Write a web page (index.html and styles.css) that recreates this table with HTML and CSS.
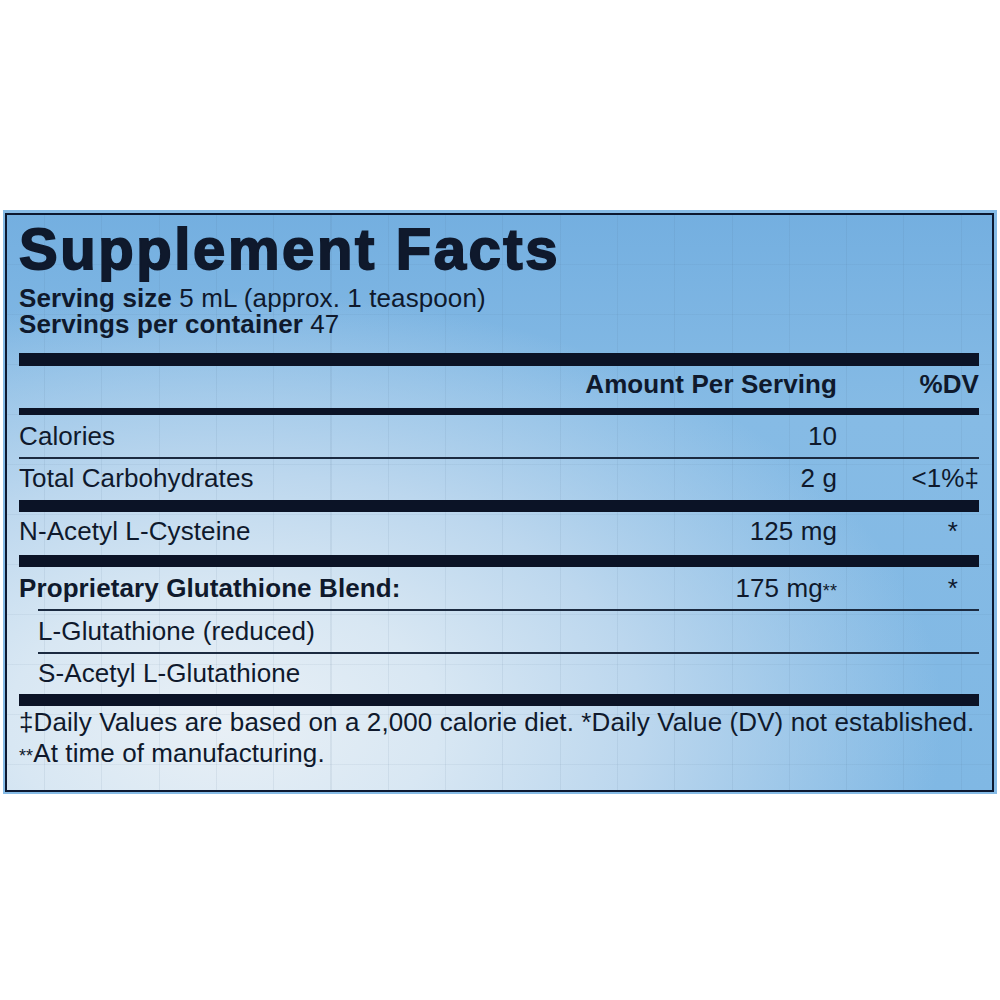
FILE: index.html
```html
<!DOCTYPE html>
<html>
<head>
<meta charset="utf-8">
<link rel="stylesheet" href="styles.css">
</head>
<body>
<div class="frame">
  <div class="label">
    <h1 class="title">Supplement Facts</h1>
    <div class="serving">
      <div class="line"><b>Serving size</b> 5 mL (approx. 1 teaspoon)</div>
      <div class="line"><b>Servings per container</b> 47</div>
    </div>
    <div class="rule thick13 first"></div>
    <div class="row hdr"><span class="name"></span><span class="amt">Amount Per Serving</span><span class="dv">%DV</span></div>
    <div class="rule thick7"></div>
    <div class="row cal"><span class="name">Calories</span><span class="amt">10</span><span class="dv"></span></div>
    <div class="rule thin"></div>
    <div class="row carb"><span class="name">Total Carbohydrates</span><span class="amt">2 g</span><span class="dv">&lt;1%‡</span></div>
    <div class="rule thick12"></div>
    <div class="row nac"><span class="name">N-Acetyl L-Cysteine</span><span class="amt">125 mg</span><span class="dv star">*</span></div>
    <div class="rule thick12"></div>
    <div class="row blend"><span class="name"><b>Proprietary Glutathione Blend:</b></span><span class="amt">175 mg<span class="sm">**</span></span><span class="dv star">*</span></div>
    <div class="rule thin indent"></div>
    <div class="row sub1"><span class="name indent">L-Glutathione (reduced)</span><span class="amt"></span><span class="dv"></span></div>
    <div class="rule thin indent"></div>
    <div class="row sub2"><span class="name indent">S-Acetyl L-Glutathione</span><span class="amt"></span><span class="dv"></span></div>
    <div class="rule thick12"></div>
    <div class="notes">
      <div class="note">‡Daily Values are based on a 2,000 calorie diet. *Daily Value (DV) not established.</div>
      <div class="note"><span class="sm">**</span>At time of manufacturing.</div>
    </div>
  </div>
</div>
</body>
</html>
```

FILE: styles.css
```css
html, body {
  margin: 0;
  padding: 0;
  background: #ffffff;
}

.frame {
  margin: 210px 0 0 3px;
  width: 994px;
  box-sizing: border-box;
  padding: 3px 3px 2px 2px;
  background: #86bbe6;
}

.label {
  border: 2px solid #0c1830;
  padding: 0 13px 18px 12px;
  color: #0f192c;
  font-family: "Liberation Sans", Arial, sans-serif;
  font-size: 26px;
  line-height: 26px;
  letter-spacing: 0.1px;
  background-color: #72aee0;
  background-image:
    repeating-linear-gradient(90deg, rgba(70, 100, 130, 0) 0px, rgba(70, 100, 130, 0) 37px, rgba(70, 100, 130, 0.09) 37px, rgba(70, 100, 130, 0.09) 38px, rgba(70, 100, 130, 0) 38px, rgba(70, 100, 130, 0) 57.3px),
    repeating-linear-gradient(180deg, rgba(70, 100, 130, 0) 0px, rgba(70, 100, 130, 0) 49px, rgba(70, 100, 130, 0.07) 49px, rgba(70, 100, 130, 0.07) 50px),
    radial-gradient(ellipse 720px 430px at 22% 88%, #e9f0f6 0%, #d8e7f3 30%, #bcd7ee 58%, rgba(114, 174, 224, 0) 100%),
    linear-gradient(180deg, #74afe0 0%, #86bbe5 35%, #80b8e4 100%);
}

.title {
  margin: 0;
  padding-top: 5px;
  height: 58px;
  font-family: "Liberation Sans", Arial, sans-serif;
  font-weight: 700;
  font-size: 58px;
  line-height: 58px;
  letter-spacing: 2.6px;
  -webkit-text-stroke: 1.8px #0f192c;
  color: #0f192c;
}

.serving {
  margin-top: 7px;
}

.line b, .hdr .amt, .hdr .dv {
  font-weight: 700;
}

.rule {
  background: #0b1326;
}
.rule.first { margin-top: 16px; }
.thick13 { height: 13px; }
.thick12 { height: 12px; }
.thick7 { height: 7px; }
.thin { height: 2px; background: #1b2a40; }
.rule.indent { margin-left: 19px; }

.row {
  display: grid;
  grid-template-columns: 1fr auto 142px;
  box-sizing: border-box;
}
.row .amt { text-align: right; white-space: nowrap; }
.row .dv { text-align: right; white-space: nowrap; }
.row .dv.star { padding-right: 21px; }
.row .name.indent { padding-left: 19px; }

.hdr { height: 42px; padding-top: 5px; font-weight: 700; }
.cal { height: 42px; padding-top: 8px; }
.carb { height: 41px; padding-top: 6px; }
.nac { height: 43px; padding-top: 6px; }
.blend { height: 42px; padding-top: 8px; }
.sub1 { height: 41px; padding-top: 7px; }
.sub2 { height: 40px; padding-top: 6px; }

.sm { font-size: 18px; }

.notes {
  padding-top: 1px;
  line-height: 31px;
  white-space: nowrap;
}
```
